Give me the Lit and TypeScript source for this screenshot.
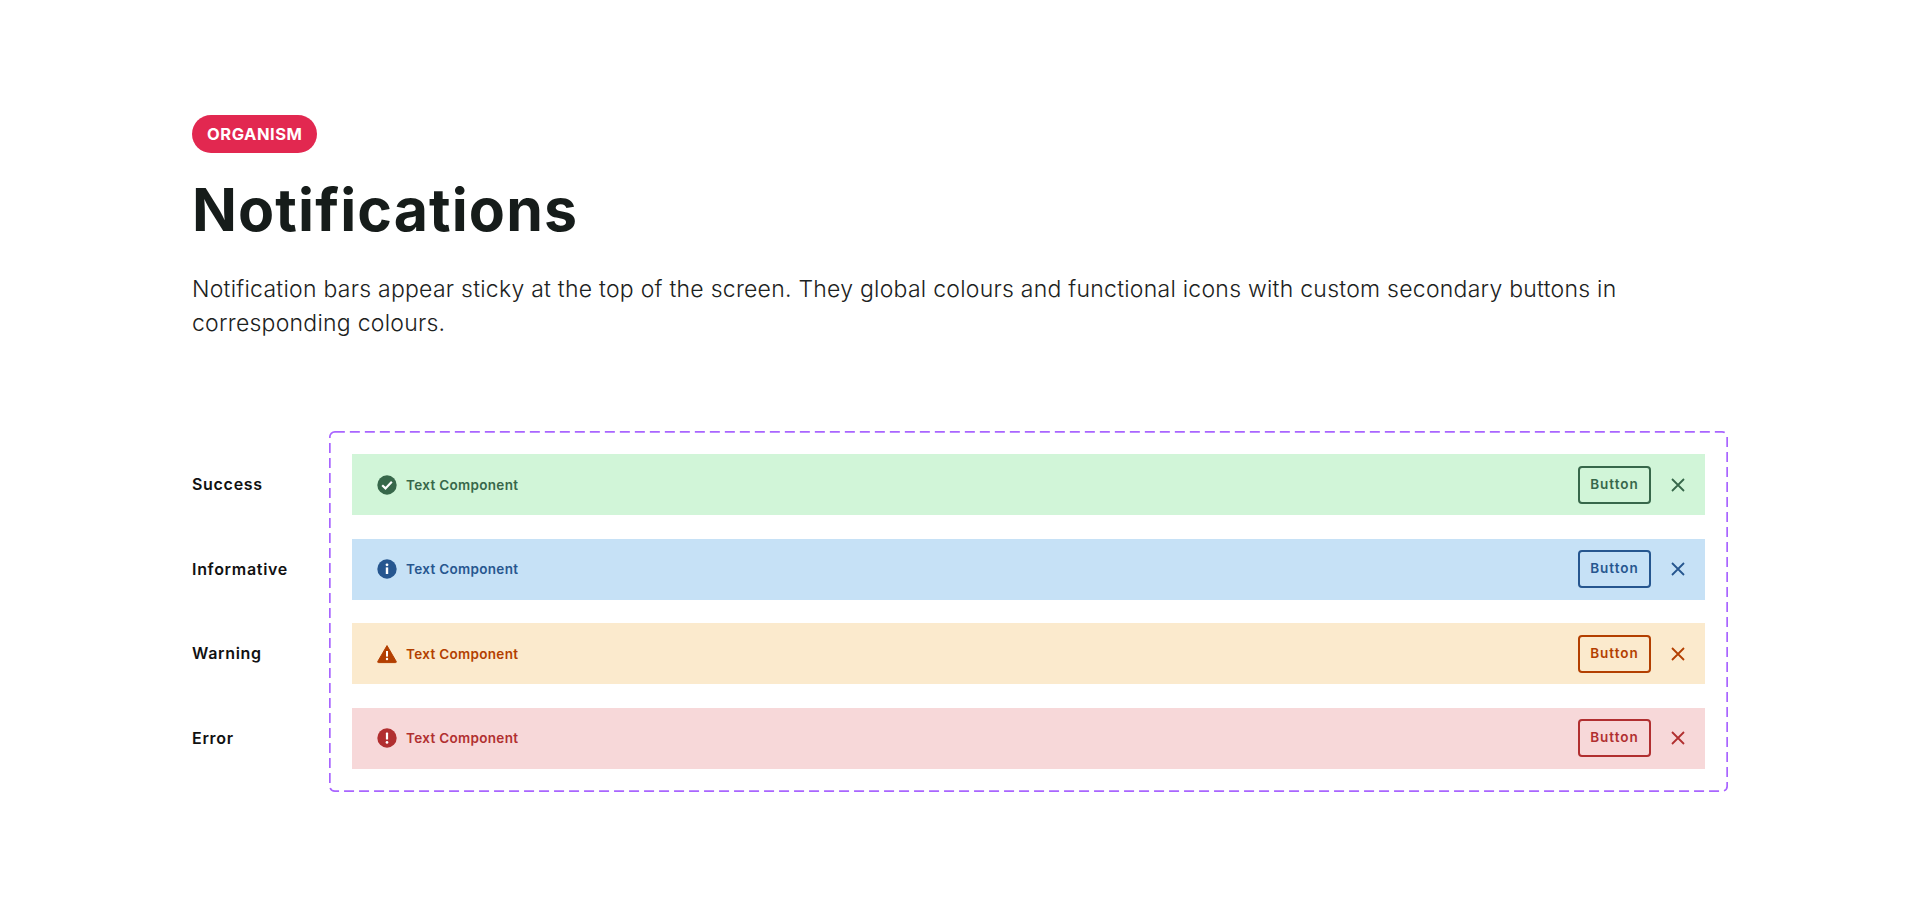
import { LitElement, html, css, svg } from "lit";
import { customElement } from "lit/decorators.js";

const icons: Record<string, unknown> = {
  success: svg`<circle cx="10" cy="10" r="9.7" fill="currentColor"/><path d="M5.2 10.2l3.3 3.2 6.3-6.6" fill="none" stroke="#fff" stroke-width="2.2"/>`,
  info: svg`<circle cx="10" cy="10" r="9.7" fill="currentColor"/><circle cx="10" cy="5.8" r="1.4" fill="#fff"/><rect x="8.8" y="8.4" width="2.4" height="6.6" fill="#fff"/>`,
  warning: svg`<path d="M10 1.6L19.2 17.4Q19.6 18.6 18.4 18.6H1.6Q.4 18.6 .8 17.4Z" fill="currentColor" stroke="currentColor" stroke-linejoin="round"/><rect x="9" y="7" width="2" height="5.6" fill="#fff"/><circle cx="10" cy="15" r="1.2" fill="#fff"/>`,
  error: svg`<circle cx="10" cy="10" r="9.7" fill="currentColor"/><rect x="8.9" y="4.6" width="2.2" height="7" rx=".6" fill="#fff"/><circle cx="10" cy="14.4" r="1.35" fill="#fff"/>`,
};

const rows = [
  { kind: "success", label: "Success" },
  { kind: "info", label: "Informative" },
  { kind: "warning", label: "Warning" },
  { kind: "error", label: "Error" },
];

@customElement("app-root")
export class AppRoot extends LitElement {
  static styles = css`
    :host {
      display: block;
      height: 907px;
      box-sizing: border-box;
      padding: 115px 192px 0;
      background: #fff;
      font-family: Inter, "Liberation Sans", sans-serif;
      color: #161c1a;
    }
    .pill {
      display: inline-block;
      height: 38px;
      line-height: 38px;
      padding: 0 14px 0 15px;
      border-radius: 19px;
      background: #e22850;
      color: #fff;
      font-size: 16.5px;
      font-weight: 700;
      letter-spacing: 0.55px;
      vertical-align: top;
    }
    h1 {
      margin: 22px 0 0;
      font-size: 59px;
      line-height: 70px;
      font-weight: 700;
      letter-spacing: 1.1px;
    }
    p {
      margin: 27px 0 0;
      width: 1480px;
      font-size: 23px;
      line-height: 34px;
      font-weight: 300;
      letter-spacing: 0.25px;
      color: #1c2221;
    }
    .demo {
      display: flex;
      margin-top: 91px;
    }
    .labels {
      width: 137px;
      display: flex;
      flex-direction: column;
      gap: 23.5px;
      padding-top: 23px;
    }
    .labels div {
      height: 61px;
      line-height: 61px;
      font-size: 16px;
      font-weight: 600;
      letter-spacing: 0.7px;
      color: #111;
    }
    .box {
      position: relative;
      width: 1399px;
      box-sizing: border-box;
      padding: 23px;
      display: flex;
      flex-direction: column;
      gap: 23.5px;
    }
    .outline {
      position: absolute;
      left: 0;
      top: 0;
      width: 1399px;
      height: 361px;
    }
    .bar {
      height: 61px;
      display: flex;
      align-items: center;
      padding: 0 16px 0 25px;
      font-size: 13.5px;
      font-weight: 600;
      letter-spacing: 0.32px;
      color: var(--fg);
      background: var(--bg);
    }
    .success { --fg: #37674a; --bg: #d1f5d8; }
    .info { --fg: #26568f; --bg: #c6e1f6; }
    .warning { --fg: #b33f00; --bg: #fbeacd; }
    .error { --fg: #b12f30; --bg: #f7d8d9; }
    .icon {
      width: 20px;
      height: 20px;
      margin-right: 9px;
      flex: none;
    }
    .text {
      flex: 1;
    }
    button {
      width: 73px;
      height: 38px;
      padding: 0 0 2px;
      margin-right: 19px;
      background: transparent;
      border: 2px solid var(--fg);
      border-radius: 4px;
      color: inherit;
      font: inherit;
      letter-spacing: 1px;
    }
    .close {
      width: 16px;
      height: 16px;
      margin-right: 3px;
      flex: none;
    }
  `;

  render() {
    return html`
      <span class="pill">ORGANISM</span>
      <h1>Notifications</h1>
      <p>Notification bars appear sticky at the top of the screen. They global colours and functional icons with custom secondary buttons in corresponding colours.</p>
      <div class="demo">
        <div class="labels">
          ${rows.map((r) => html`<div>${r.label}</div>`)}
        </div>
        <div class="box">
          <svg class="outline" viewBox="0 0 1399 361">
            <rect x="0.85" y="0.85" width="1397.3" height="359.3" rx="5" fill="none" stroke="#a965ff" stroke-width="1.7" stroke-dasharray="10 5"/>
          </svg>
          ${rows.map(
            (r) => html`
              <div class="bar ${r.kind}">
                <svg class="icon" viewBox="0 0 20 20">${icons[r.kind]}</svg>
                <span class="text">Text Component</span>
                <button>Button</button>
                <svg class="close" viewBox="0 0 16 16">
                  <path d="M2 2l12 12M14 2L2 14" fill="none" stroke="currentColor" stroke-width="1.8"/>
                </svg>
              </div>
            `
          )}
        </div>
      </div>
    `;
  }
}
